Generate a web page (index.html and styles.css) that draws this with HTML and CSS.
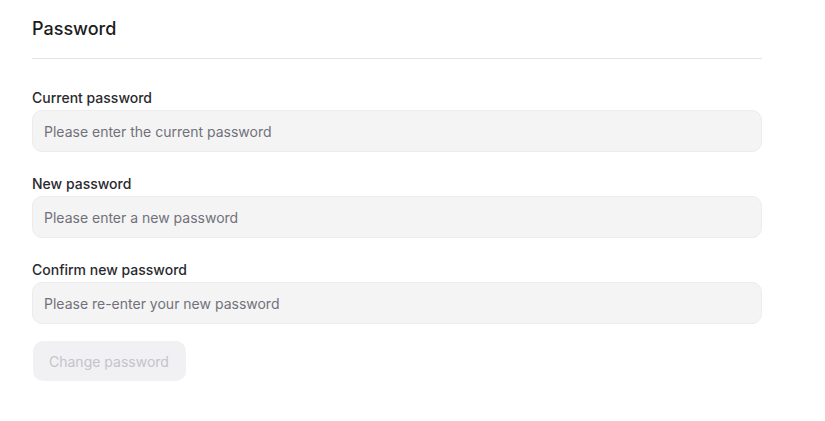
FILE: index.html
```html
<!DOCTYPE html>
<html lang="en">
<head>
<meta charset="utf-8">
<title>Password</title>
<link rel="stylesheet" href="styles.css">
</head>
<body>
<main class="page">
  <section class="card">
    <h2 class="title">Password</h2>
    <form class="form">
      <div class="field">
        <label class="label" for="cur">Current password</label>
        <input class="input" id="cur" type="password" placeholder="Please enter the current password">
      </div>
      <div class="field">
        <label class="label" for="new">New password</label>
        <input class="input" id="new" type="password" placeholder="Please enter a new password">
      </div>
      <div class="field field-last">
        <label class="label" for="conf">Confirm new password</label>
        <input class="input" id="conf" type="password" placeholder="Please re-enter your new password">
      </div>
      <div class="actions">
        <button class="btn" type="button" disabled>Change password</button>
      </div>
    </form>
  </section>
</main>
</body>
</html>
```

FILE: styles.css
```css
* { box-sizing: border-box; }
html, body { margin: 0; padding: 0; background: #ffffff; }
body {
  font-family: Inter, "Noto Sans", "Liberation Sans", sans-serif;
  color: #18181b;
}
.page { padding: 17px 63px 0 32px; }
.card { width: 730px; }
.title {
  margin: 0;
  font-size: 18px;
  font-weight: 500;
  line-height: 24px;
  color: #1c1c20;
  padding-bottom: 17px;
  border-bottom: 1px solid #e4e4e7;
}
.form {
  display: flex;
  flex-direction: column;
  padding-top: 29px;
}
.field {
  display: flex;
  flex-direction: column;
  gap: 2px;
  margin-bottom: 22px;
}
.field-last { margin-bottom: 17px; }
.label {
  font-size: 14px;
  font-weight: 500;
  line-height: 20px;
  color: #2a2a2e;
}
.input {
  height: 42px;
  width: 100%;
  border: 1px solid #ececee;
  border-radius: 10px;
  background: #f4f4f5;
  padding: 0 11px;
  font-family: inherit;
  font-size: 14px;
  color: #18181b;
  outline: none;
}
.input::placeholder { color: #71717a; opacity: 1; }
.actions { display: flex; }
.btn {
  height: 40px;
  padding: 0 17px 0 16px;
  margin-left: 1px;
  border: none;
  border-radius: 10px;
  background: #f1f1f3;
  color: #c4c4c8;
  font-family: inherit;
  font-size: 14px;
  font-weight: 400;
}
```
